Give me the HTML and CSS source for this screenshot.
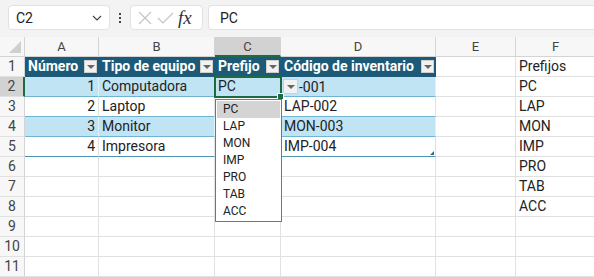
FILE: index.html
```html
<!DOCTYPE html>
<html lang="es">
<head>
    <meta charset="UTF-8">
    <title>Inventario</title>
    <link rel="stylesheet" href="styles.css">
</head>
<body>
    <!-- Barra de fórmulas -->
    <div class="formula-bar">
        <div class="name-box">
            <span>C2</span>
            <svg width="12" height="8" viewBox="0 0 12 8"><path d="M2 2 L6 6 L10 2" fill="none" stroke="#444" stroke-width="1.2"/></svg>
        </div>
        <div class="dots"><i></i><i></i><i></i></div>
        <div class="fx-box">
            <svg width="16" height="16" viewBox="0 0 16 16"><path d="M2 2 L14 14 M14 2 L2 14" stroke="#c4c4c4" stroke-width="1.2"/></svg>
            <svg width="18" height="16" viewBox="0 0 18 16"><path d="M2 8 L7 13 L17 3" fill="none" stroke="#c4c4c4" stroke-width="1.2"/></svg>
            <span class="fx">fx</span>
        </div>
        <div class="formula-input">PC</div>
    </div>

    <!-- Hoja -->
    <div class="sheet">
        <div class="corner"></div>
        <div class="hd">A</div>
        <div class="hd">B</div>
        <div class="hd sel">C</div>
        <div class="hd">D</div>
        <div class="hd">E</div>
        <div class="hd">F</div>

        <div class="rh">1</div>
        <div class="c th">Número<b class="flt"></b></div>
        <div class="c th">Tipo de equipo<b class="flt"></b></div>
        <div class="c th">Prefijo<b class="flt"></b></div>
        <div class="c th">Código de inventario<b class="flt"></b></div>
        <div class="c"></div>
        <div class="c">Prefijos</div>

        <div class="rh sel">2</div>
        <div class="c band num">1</div>
        <div class="c band">Computadora</div>
        <div class="c band active">PC</div>
        <div class="c band"><b class="dd-btn"></b>-001</div>
        <div class="c"></div>
        <div class="c">PC</div>

        <div class="rh">3</div>
        <div class="c row num">2</div>
        <div class="c row">Laptop</div>
        <div class="c row"></div>
        <div class="c row">LAP-002</div>
        <div class="c"></div>
        <div class="c">LAP</div>

        <div class="rh">4</div>
        <div class="c band num">3</div>
        <div class="c band">Monitor</div>
        <div class="c band"></div>
        <div class="c band">MON-003</div>
        <div class="c"></div>
        <div class="c">MON</div>

        <div class="rh">5</div>
        <div class="c row last num">4</div>
        <div class="c row last">Impresora</div>
        <div class="c row last"></div>
        <div class="c row last end">IMP-004</div>
        <div class="c"></div>
        <div class="c">IMP</div>

        <div class="rh">6</div>
        <div class="c"></div><div class="c"></div><div class="c"></div><div class="c"></div><div class="c"></div>
        <div class="c">PRO</div>

        <div class="rh">7</div>
        <div class="c"></div><div class="c"></div><div class="c"></div><div class="c"></div><div class="c"></div>
        <div class="c">TAB</div>

        <div class="rh">8</div>
        <div class="c"></div><div class="c"></div><div class="c"></div><div class="c"></div><div class="c"></div>
        <div class="c">ACC</div>

        <div class="rh">9</div>
        <div class="c"></div><div class="c"></div><div class="c"></div><div class="c"></div><div class="c"></div><div class="c"></div>

        <div class="rh">10</div>
        <div class="c"></div><div class="c"></div><div class="c"></div><div class="c"></div><div class="c"></div><div class="c"></div>

        <div class="rh">11</div>
        <div class="c"></div><div class="c"></div><div class="c"></div><div class="c"></div><div class="c"></div><div class="c"></div>

        <!-- Lista de validación -->
        <ul class="dropdown">
            <li class="hover">PC</li>
            <li>LAP</li>
            <li>MON</li>
            <li>IMP</li>
            <li>PRO</li>
            <li>TAB</li>
            <li>ACC</li>
        </ul>
    </div>
</body>
</html>
```

FILE: styles.css
```css
/* CSS */
* {
    box-sizing: border-box;
}
body {
    margin: 0;
    width: 594px;
    height: 277px;
    overflow: hidden;
    background-color: #f3f3f3;
    font-family: Roboto, "Liberation Sans", sans-serif;
    color: #222;
}
.formula-bar {
    display: flex;
    align-items: center;
    height: 37px;
    padding: 0 0 2px 8px;
}
.name-box, .fx-box, .formula-input {
    height: 25px;
    background: #fff;
    border: 1px solid #e2e2e2;
    border-radius: 4px;
    display: flex;
    align-items: center;
}
.name-box {
    width: 102px;
    padding: 0 6px 0 7px;
    justify-content: space-between;
    font-size: 14px;
}
.dots {
    width: 20px;
    display: flex;
    flex-direction: column;
    align-items: center;
    gap: 2px;
}
.dots i {
    width: 2px;
    height: 2px;
    background: #444;
}
.fx-box {
    width: 73px;
    padding: 0 4px 0 6px;
    gap: 3px;
}
.fx {
    font-family: "Liberation Serif", serif;
    font-style: italic;
    font-size: 19px;
    line-height: 19px;
    color: #333;
    margin-left: 1px;
}
.formula-input {
    flex: 1;
    margin-left: 5px;
    border-right: none;
    border-radius: 4px 0 0 4px;
    padding-left: 11px;
    font-size: 14px;
}
.sheet {
    position: relative;
    display: grid;
    grid-template-columns: 25px 74px 116px 66px 155px 80px 80px;
    grid-auto-rows: 20px;
    background: #fff;
}
.corner {
    background: #f7f7f7;
    border-right: 1px solid #d4d4d4;
    border-bottom: 1px solid #d4d4d4;
    position: relative;
}
.corner::after {
    content: "";
    position: absolute;
    right: 3px;
    bottom: 3px;
    border-left: 12px solid transparent;
    border-bottom: 12px solid #cfcfcf;
}
.hd {
    background: #f7f7f7;
    border-right: 1px solid #d4d4d4;
    border-bottom: 1px solid #d4d4d4;
    text-align: center;
    font-size: 13px;
    line-height: 19px;
    color: #444;
}
.hd.sel {
    background: #d2d2d2;
    border-bottom: 2px solid #1e6b42;
}
.rh {
    background: #f7f7f7;
    border-right: 1px solid #d4d4d4;
    border-bottom: 1px solid #e1e1e1;
    text-align: center;
    font-size: 14px;
    line-height: 19px;
    color: #444;
}
.rh.sel {
    background: #d2d2d2;
    border-right: 2px solid #1e6b42;
}
.c {
    position: relative;
    border-right: 1px solid #e1e1e1;
    border-bottom: 1px solid #e1e1e1;
    padding-left: 3px;
    font-size: 14px;
    line-height: 19px;
    white-space: nowrap;
}
.c.num {
    text-align: right;
    padding-right: 3px;
}
.c.th {
    background: #1d5a78;
    color: #fff;
    font-weight: bold;
    border-right: 1px solid #1d5a78;
    border-bottom: 1px solid #1d5a78;
}
.c.band {
    background: #c1e4f5;
    border-right: 1px solid #dff1fa;
    border-bottom: 1px solid #6fb4d2;
}
.c.row {
    border-bottom: 1px solid #6fb4d2;
}
.c.last {
    border-bottom: 1px solid #4d93b5;
}
.c.end::after {
    content: "";
    position: absolute;
    right: 1px;
    bottom: 1px;
    border-left: 4px solid transparent;
    border-bottom: 4px solid #2a6b96;
}
.c.active {
    border: 2px solid #1e6b42;
    margin: -1px;
    padding-left: 2px;
    line-height: 17px;
    z-index: 2;
}
.c.active::after {
    content: "";
    position: absolute;
    right: -4px;
    bottom: -4px;
    width: 5px;
    height: 5px;
    background: #1e6b42;
    border: 1px solid #fff;
}
.flt, .dd-btn {
    position: absolute;
    top: 3px;
    right: 1px;
    width: 13px;
    height: 13px;
    background: #f2f2f2;
    border: 1px solid #cfcfcf;
}
.flt::after, .dd-btn::after {
    content: "";
    position: absolute;
    left: 2px;
    top: 4px;
    border-left: 4px solid transparent;
    border-right: 4px solid transparent;
    border-top: 4px solid #666;
}
.dd-btn {
    position: relative;
    display: inline-block;
    top: 2px;
    right: auto;
    width: 15px;
    height: 15px;
    margin-left: -1px;
    margin-right: 1px;
}
.dd-btn::after {
    left: 3px;
    top: 5px;
}
.dropdown {
    position: absolute;
    left: 215px;
    top: 62px;
    width: 67px;
    margin: 0;
    padding: 1px;
    list-style: none;
    background: #fff;
    border: 1px solid #767676;
    z-index: 3;
}
.dropdown li {
    height: 17px;
    line-height: 17px;
    padding-left: 6px;
    font-size: 12px;
    color: #222;
}
.dropdown li.hover {
    background: #d4d4d4;
}
```
